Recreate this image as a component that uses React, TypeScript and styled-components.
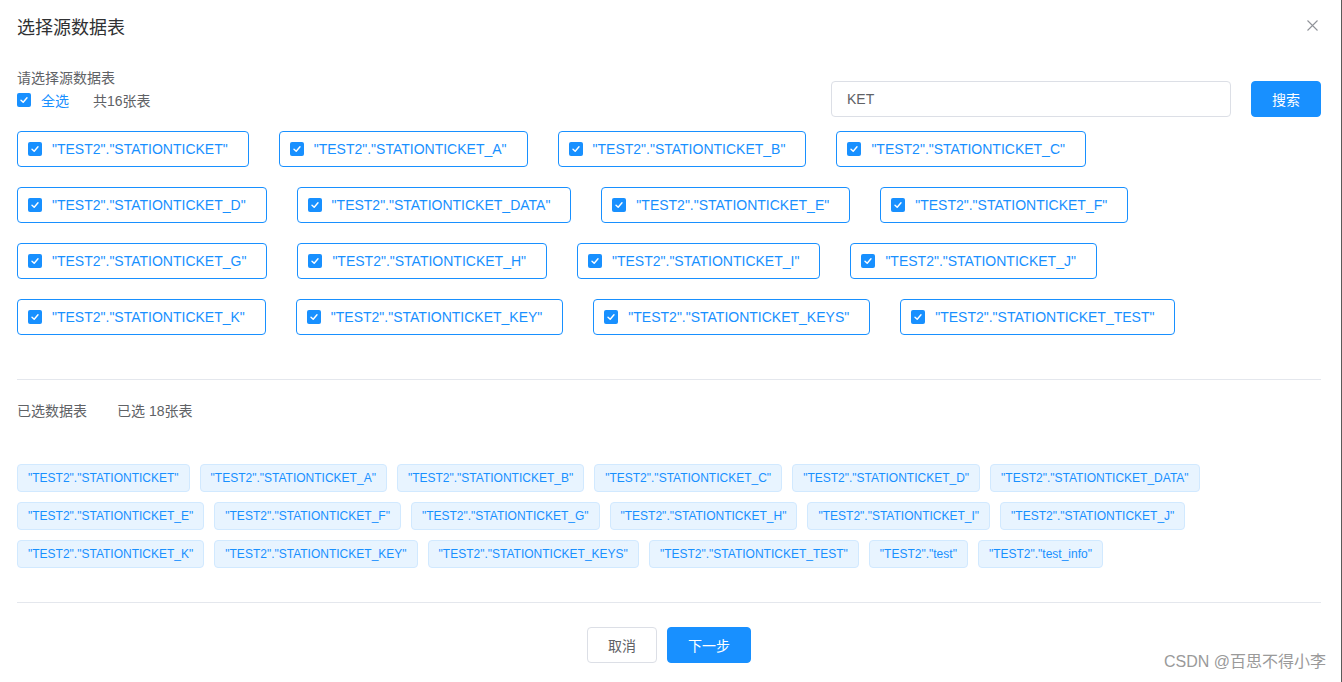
import React from "react";
import styled, { createGlobalStyle } from "styled-components";

const GlobalStyle = createGlobalStyle`
  html, body {
    margin: 0;
    padding: 0;
    background: #ffffff;
  }
  body {
    font-family: "Liberation Sans", "Noto Sans CJK SC", Arial, sans-serif;
    -webkit-font-smoothing: antialiased;
  }
  * { box-sizing: border-box; }
`;

const Page = styled.div`
  position: relative;
  width: 1342px;
  height: 682px;
  padding: 0 20px 0 17px;
  border-right: 1px solid #5a5a5a;
  background: #fff;
  overflow: hidden;
`;

const Header = styled.div`
  display: flex;
  justify-content: space-between;
  align-items: flex-start;
  padding-top: 16px;
`;

const Title = styled.div`
  font-size: 18px;
  line-height: 24px;
  color: #303133;
`;

const CloseBtn = styled.button`
  border: 0;
  background: transparent;
  padding: 0;
  margin: 4px 3px 0 0;
  width: 11px;
  height: 11px;
  display: flex;
  cursor: pointer;
`;

const TopRow = styled.div`
  display: flex;
  justify-content: space-between;
  align-items: flex-start;
  margin-top: 28px;
`;

const LeftCol = styled.div`
  display: flex;
  flex-direction: column;
  gap: 2px;
`;

const Label = styled.div`
  font-size: 14px;
  line-height: 20px;
  color: #606266;
`;

const CheckAllRow = styled.div`
  display: flex;
  align-items: center;
  height: 20px;
`;

const CheckAllText = styled.span`
  font-size: 14px;
  color: #1890ff;
  margin-left: 10px;
`;

const CountText = styled.span`
  font-size: 14px;
  color: #606266;
  margin-left: 24px;
`;

const SearchGroup = styled.div`
  display: flex;
  gap: 20px;
  margin-top: 13px;
`;

const Input = styled.input`
  width: 400px;
  height: 36px;
  border: 1px solid #dcdfe6;
  border-radius: 4px;
  padding: 0 15px;
  font-size: 14px;
  font-family: inherit;
  color: #606266;
  outline: none;
`;

const Button = styled.button<{ $primary?: boolean }>`
  height: 36px;
  padding: 0 20px;
  border-radius: 4px;
  font-size: 14px;
  font-family: inherit;
  cursor: pointer;
  border: 1px solid ${(p) => (p.$primary ? "#1890ff" : "#dcdfe6")};
  background: ${(p) => (p.$primary ? "#1890ff" : "#ffffff")};
  color: ${(p) => (p.$primary ? "#ffffff" : "#606266")};
`;

const CheckGrid = styled.div`
  display: flex;
  flex-wrap: wrap;
  gap: 20px 30px;
  margin-top: 14px;
`;

const CheckItem = styled.label`
  display: inline-flex;
  align-items: center;
  height: 36px;
  padding: 0 20px 1px 10px;
  border: 1px solid #1890ff;
  border-radius: 4px;
  cursor: pointer;
  white-space: nowrap;
`;

const ItemText = styled.span`
  font-size: 14px;
  color: #1890ff;
  padding-left: 10px;
`;

const Box = styled.span`
  width: 14px;
  height: 14px;
  border-radius: 2px;
  background: #1890ff;
  display: inline-flex;
  align-items: center;
  justify-content: center;
  flex-shrink: 0;
`;

const Divider = styled.div<{ $top: number }>`
  height: 1px;
  background: #e4e7ed;
  margin-top: ${(p) => p.$top}px;
`;

const SelectedHead = styled.div`
  display: flex;
  gap: 30px;
  margin-top: 21px;
  font-size: 14px;
  line-height: 20px;
  color: #606266;
`;

const TagWrap = styled.div`
  display: flex;
  flex-wrap: wrap;
  gap: 10px 10px;
  margin-top: 43px;
`;

const Tag = styled.span`
  display: inline-flex;
  align-items: center;
  height: 28px;
  padding: 0 10px;
  font-size: 12px;
  color: #1890ff;
  background: #e8f4ff;
  border: 1px solid #d1e9ff;
  border-radius: 4px;
  white-space: nowrap;
`;

const Footer = styled.div`
  display: flex;
  justify-content: center;
  gap: 10px;
  margin-top: 24px;
`;

const Watermark = styled.div`
  position: absolute;
  right: 15px;
  bottom: 10px;
  font-size: 16px;
  line-height: 20px;
  color: #9a9a9a;
  text-shadow: 0 0 1px #ffffff;
  pointer-events: none;
`;

const Check = () => (
  <Box>
    <svg width="10" height="10" viewBox="0 0 10 10">
      <path d="M2 5.2 L4.2 7.3 L8 2.8" fill="none" stroke="#fff" strokeWidth="1.4" strokeLinecap="round" strokeLinejoin="round" />
    </svg>
  </Box>
);

const suffixes = ["", "_A", "_B", "_C", "_D", "_DATA", "_E", "_F", "_G", "_H", "_I", "_J", "_K", "_KEY", "_KEYS", "_TEST"];
const tables = suffixes.map((s) => `"TEST2"."STATIONTICKET${s}"`);
const selected = [...tables, `"TEST2"."test"`, `"TEST2"."test_info"`];

export default function App() {
  return (
    <>
      <GlobalStyle />
      <Page>
        <Header>
          <Title>选择源数据表</Title>
          <CloseBtn aria-label="close">
            <svg width="11" height="11" viewBox="0 0 11 11">
              <path d="M0.5 0.5 L10.5 10.5 M10.5 0.5 L0.5 10.5" stroke="#909399" strokeWidth="1.1" />
            </svg>
          </CloseBtn>
        </Header>

        <TopRow>
          <LeftCol>
            <Label>请选择源数据表</Label>
            <CheckAllRow>
              <Check />
              <CheckAllText>全选</CheckAllText>
              <CountText>共16张表</CountText>
            </CheckAllRow>
          </LeftCol>
          <SearchGroup>
            <Input defaultValue="KET" />
            <Button $primary>搜索</Button>
          </SearchGroup>
        </TopRow>

        <CheckGrid>
          {tables.map((t) => (
            <CheckItem key={t}>
              <Check />
              <ItemText>{t}</ItemText>
            </CheckItem>
          ))}
        </CheckGrid>

        <Divider $top={44} />

        <SelectedHead>
          <span>已选数据表</span>
          <span>已选 18张表</span>
        </SelectedHead>

        <TagWrap>
          {selected.map((t) => (
            <Tag key={t}>{t}</Tag>
          ))}
        </TagWrap>

        <Divider $top={34} />

        <Footer>
          <Button>取消</Button>
          <Button $primary>下一步</Button>
        </Footer>

        <Watermark>CSDN @百思不得小李</Watermark>
      </Page>
    </>
  );
}
